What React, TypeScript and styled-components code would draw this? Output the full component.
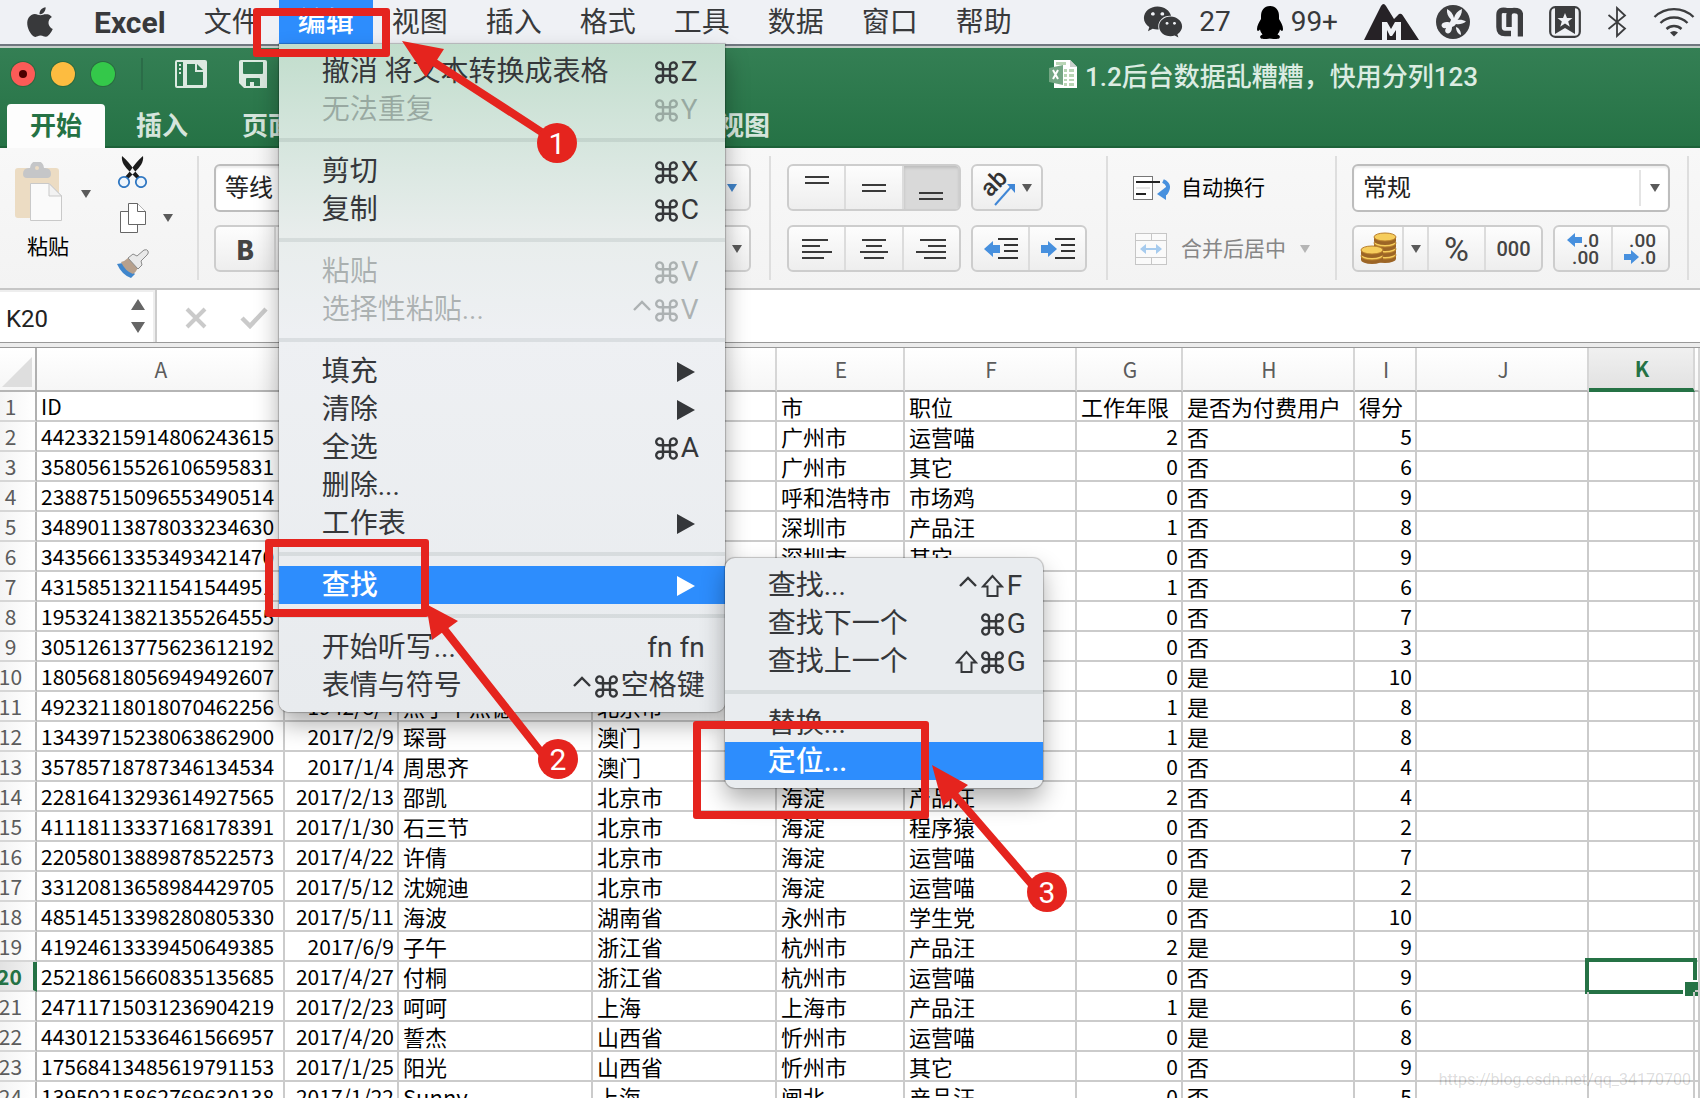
import React from "react";
import styled, { createGlobalStyle, css } from "styled-components";
import { IoLogoApple } from "react-icons/io5";
import { FaWeixin } from "react-icons/fa";

const ui = `Roboto, "Noto Sans CJK SC", sans-serif`;
const cjk = `"Noto Sans CJK SC", Roboto, sans-serif`;
const red = "#e5241e";
const green = "#257245";
const blue = "#2d8dfd";

const Global = createGlobalStyle`
  * { box-sizing: border-box; }
  body { margin: 0; font-family: ${ui}; background: #fff; overflow: hidden; }
  button, select, input { font: inherit; color: inherit; border: 0; margin: 0; padding: 0; background: none; outline: 0; border-radius: 0; }
  svg { display: block; flex: none; }
`;

const Page = styled.div`
  position: relative;
  display: flex;
  flex-direction: column;
  height: 100vh;
  overflow: hidden;
`;

/* ---------- system menu bar ---------- */

const MenuBar = styled.nav`
  display: flex;
  align-items: center;
  height: 44px;
  flex: none;
  padding: 0 5px 0 23px;
  background: #eff1f5;
  color: #38393b;
  font-size: 28px;
  line-height: 40px;
`;

const MenuSlot = styled.div`
  position: relative;
  z-index: 5;
`;

const MenuTitle = styled.button<{ $open?: boolean; $bold?: boolean }>`
  display: block;
  height: 44px;
  padding: 2px 19px 0;
  white-space: nowrap;
  ${(p) =>
    p.$bold &&
    css`
      font-size: 30px;
      font-weight: 700;
    `}
  ${(p) =>
    p.$open &&
    css`
      background: ${blue};
      color: #fff;
      font-weight: 500;
    `}
`;

const AppleMark = styled.span`
  width: 52px;
`;

const Status = styled.div`
  display: flex;
  align-items: center;
  margin-left: auto;
  gap: 26px;
`;

const StatusItem = styled.span<{ $gap?: number }>`
  display: flex;
  align-items: center;
  gap: ${(p) => p.$gap ?? 0}px;
`;

/* ---------- drop-down menus ---------- */

const Panel = styled.ul<{ $sub?: boolean }>`
  position: absolute;
  list-style: none;
  margin: 0;
  padding: 8px 0;
  color: #35373a;
  font-size: 28px;
  line-height: 36px;
  font-weight: 400;
  ${(p) =>
    p.$sub
      ? css`
          left: 100%;
          top: -8px;
          width: 318px;
          border-radius: 10px;
          background: #e9ecef;
          --end: 12px;
        `
      : css`
          left: 0;
          top: 100%;
          width: 446px;
          border-radius: 0 0 10px 10px;
          background: linear-gradient(#c1ddcc, #d6e6de 100px, #e8edec 190px, #eef0f3 290px, #e8ebee);
          --end: 20px;
        `}
  box-shadow: 0 0 1px 1px rgba(0, 0, 0, 0.22), 0 12px 24px rgba(0, 0, 0, 0.32);
`;

const Item = styled.li`
  position: relative;
`;

const ItemButton = styled.button<{ $on?: boolean; $off?: boolean }>`
  display: flex;
  align-items: center;
  width: 100%;
  height: 38px;
  padding: 2px var(--end) 0 43px;
  white-space: nowrap;
  ${(p) => p.$off && "color: rgba(50, 60, 58, 0.34);"}
  ${(p) => p.$on && `background: ${blue}; color: #fff; font-weight: 500;`}
`;

const Keys = styled.span`
  display: flex;
  align-items: center;
  gap: 3px;
  margin-left: auto;
  font-weight: 400;
`;

const Key = styled.span`
  min-width: 24px;
  text-align: left;
`;

const Divider = styled.li`
  height: 4px;
  margin: 10px 0;
  background: rgba(60, 80, 80, 0.11);
`;

/* ---------- window chrome ---------- */

const Strip = styled.div`
  height: 4px;
  flex: none;
  border-bottom: 2px solid #c6cfca;
  background: #70777f;
`;

const Chrome = styled.header`
  flex: none;
  background: linear-gradient(#347f54, ${green});
  box-shadow: inset 0 -2px #1d6239;
`;

const TitleRow = styled.div`
  display: flex;
  align-items: center;
  height: 56px;
  padding: 0 222px 4px 11px;
`;

const Lights = styled.div`
  display: flex;
  gap: 16px;
  padding-right: 26px;
  border-right: 2px solid #2b6c48;
  height: 32px;
  align-items: center;
`;

const Light = styled.button<{ $c: string }>`
  width: 24px;
  height: 24px;
  border-radius: 50%;
  background: ${(p) => p.$c};
  box-shadow: 0 0 0 1px #2a6a40;
  display: grid;
  place-items: center;
`;

const LightDot = styled.i`
  width: 8px;
  height: 8px;
  border-radius: 50%;
  background: #4d0000;
`;

const QuickTools = styled.div`
  display: flex;
  gap: 32px;
  padding-left: 32px;
`;

const DocTitle = styled.h1`
  display: flex;
  align-items: center;
  gap: 8px;
  margin: 0 0 0 auto;
  font-size: 26px;
  line-height: 32px;
  font-weight: 500;
  color: #dcece2;
  white-space: nowrap;
  span { padding-top: 6px; }
`;

const Tabs = styled.div`
  display: flex;
  height: 44px;
  padding-left: 3px;
`;

const Tab = styled.button<{ $on?: boolean }>`
  margin: 0 4px;
  padding: 0 23px;
  font-size: 26px;
  line-height: 42px;
  font-weight: 700;
  white-space: nowrap;
  border-radius: 4px 4px 0 0;
  color: ${(p) => (p.$on ? green : "#d5e5dc")};
  background: ${(p) => (p.$on ? "#fdfdfd" : "none")};
`;

/* ---------- ribbon ---------- */

const Ribbon = styled.div`
  display: flex;
  flex: none;
  height: 142px;
  padding-top: 8px;
  border-bottom: 2px solid #c6c6c6;
  background: linear-gradient(#f8f8f8, #f3f3f3);
`;

const Group = styled.section<{ $l: number; $r: number }>`
  flex: none;
  height: 124px;
  padding: 8px ${(p) => p.$r}px 0 ${(p) => p.$l}px;
  border-right: 2px solid #dedede;
`;

const ClipGroup = styled(Group)`
  display: flex;
  padding-top: 0;
`;

const Stack = styled.div`
  display: flex;
  flex-direction: column;
  gap: 14px;
`;

const Line = styled.div<{ $gap?: number }>`
  display: flex;
  align-items: center;
  height: 47px;
  gap: ${(p) => p.$gap ?? 10}px;
`;

const PasteButton = styled.button`
  display: flex;
  flex-direction: column;
  align-items: center;
  width: 66px;
  padding-top: 6px;
  font-size: 21px;
  line-height: 30px;
  color: #000;
  svg { align-self: flex-start; margin-bottom: 10px; }
`;

const PasteCaret = styled.button`
  align-self: flex-start;
  padding-top: 34px;
  margin-right: 26px;
`;

const ClipRow = styled.div`
  display: flex;
  align-items: center;
  gap: 14px;
  height: 32px;
`;

const IconButton = styled.button`
  display: block;
`;

const Segments = styled.div<{ $w: number }>`
  display: flex;
  width: ${(p) => p.$w}px;
  height: 47px;
  border: 2px solid #cdcdcd;
  border-radius: 6px;
  background: linear-gradient(#fdfdfd, #eeeeee);
  overflow: hidden;
`;

const Seg = styled.button<{ $on?: boolean; $w?: number }>`
  ${(p) => (p.$w ? `width: ${p.$w}px; flex: none;` : "flex: 1;")}
  display: flex;
  align-items: center;
  justify-content: center;
  gap: 6px;
  font-size: 20px;
  line-height: 24px;
  font-weight: 500;
  color: #444;
  ${(p) => p.$on && "background: #d9d9d9; box-shadow: inset 0 2px 3px #bdbdbd;"}
  & + & { border-left: 2px solid #dcdcdc; }
`;

const Percent = styled.span`
  font-size: 34px;
  line-height: 40px;
  font-weight: 400;
`;

const Bold = styled.span`
  font-family: ${cjk};
  font-size: 26px;
  font-weight: 900;
  line-height: 32px;
`;

const SelectBox = styled.label<{ $w: number }>`
  display: grid;
  grid-template-columns: 1fr 29px;
  align-items: center;
  width: ${(p) => p.$w}px;
  height: 48px;
  border: 2px solid #bdbdbd;
  border-radius: 6px;
  background: #fff;
  box-shadow: inset 0 2px 2px #eee;
  select {
    grid-area: 1 / 1 / 2 / 3;
    appearance: none;
    padding-left: 9px;
    height: 44px;
    font-size: 24px;
    color: #222;
  }
  > span {
    grid-area: 1 / 2;
    display: grid;
    place-items: center;
    height: 36px;
    border-left: 2px solid #e4e4e4;
    pointer-events: none;
  }
`;

const TextButton = styled.button<{ $off?: boolean }>`
  display: flex;
  align-items: center;
  gap: 8px;
  font-size: 21px;
  line-height: 30px;
  white-space: nowrap;
  color: ${(p) => (p.$off ? "#868686" : "#000")};
`;

/* ---------- formula bar ---------- */

const FormulaBar = styled.div`
  display: flex;
  flex: none;
  height: 52px;
  background: #fff;
`;

const NameBox = styled.label`
  display: flex;
  align-items: center;
  width: 157px;
  padding: 0 10px 0 6px;
  border-right: 2px solid #cdcdcd;
  box-shadow: inset -2px 2px #eeeeee;
  input { width: 100%; min-width: 0; flex: 1; padding-top: 6px; font-size: 24px; color: #222; }
`;

const FormulaTools = styled.div`
  display: flex;
  align-items: center;
  gap: 33px;
  padding: 4px 30px 0 28px;
`;

const FormulaInput = styled.input`
  flex: 1;
  font-size: 22px;
`;

const SplitBar = styled.div`
  flex: none;
  height: 6px;
  border-top: 1px solid #999;
  border-bottom: 1px solid #999;
  background: #ececec;
`;

/* ---------- sheet ---------- */

const SheetArea = styled.main`
  flex: 1;
  min-height: 0;
  overflow: hidden;
`;

const Sheet = styled.table`
  table-layout: fixed;
  width: 100%;
  border-collapse: separate;
  border-spacing: 0;
  font-family: ${cjk};
  font-size: 22px;
  line-height: 28px;
  color: #000;
`;

const SheetCol = styled.col<{ $w?: number }>`
  ${(p) => p.$w && `width: ${p.$w}px;`}
`;

const ColHead = styled.th<{ $on?: boolean }>`
  height: 44px;
  padding: 0 0 0 2px;
  font-size: 21px;
  font-weight: ${(p) => (p.$on ? 700 : 400)};
  color: ${(p) => (p.$on ? green : "#5c5c5c")};
  background: ${(p) => (p.$on ? "linear-gradient(#f0f0f0, #e2e2e2)" : "linear-gradient(#ffffff, #f6f6f6)")};
  border-right: 2px solid #d6d6d6;
  border-bottom: ${(p) => (p.$on ? `4px solid ${green}` : "2px solid #b5b5b5")};
`;

const Corner = styled(ColHead)`
  border-right-color: #b0b0b0;
  svg { margin-top: 6px; }
`;

const RowHead = styled.th<{ $on?: boolean }>`
  height: 30px;
  padding: 0 14px 0 0;
  text-align: center;
  white-space: nowrap;
  font-size: 21px;
  font-weight: ${(p) => (p.$on ? 700 : 400)};
  color: ${(p) => (p.$on ? green : "#5c5c5c")};
  background: ${(p) => (p.$on ? "linear-gradient(90deg, #e2e2e2, #f2f2f2)" : "linear-gradient(90deg, #f4f4f4, #ffffff)")};
  border-right: ${(p) => (p.$on ? `4px solid ${green}` : "2px solid #b0b0b0")};
  border-bottom: 2px solid #d6d6d6;
  div { display: flex; justify-content: center; margin: 0 -8px; }
`;

const Cell = styled.td<{ $num?: boolean; $right?: boolean }>`
  position: relative;
  height: 30px;
  padding: 0 3px 0 4px;
  white-space: nowrap;
  border-right: 2px solid #cbcbcb;
  border-bottom: 2px solid #cbcbcb;
  font-size: ${(p) => (p.$num ? 21 : 22)}px;
  text-align: ${(p) => (p.$right ? "right" : "left")};
`;

const Selection = styled.div`
  position: absolute;
  inset: -4px;
  border: 4px solid ${green};
  &::after {
    content: "";
    position: absolute;
    right: -8px;
    bottom: -8px;
    width: 14px;
    height: 14px;
    border: 2px solid #fff;
    background: ${green};
  }
`;

const Watermark = styled.div`
  position: absolute;
  right: 9px;
  bottom: 6px;
  font-size: 16px;
  line-height: 24px;
  color: rgba(0, 0, 0, 0.15);
`;

/* ---------- annotations ---------- */

const Marks = styled.div`
  position: absolute;
  inset: 0;
  z-index: 10;
  pointer-events: none;
  > svg { position: absolute; left: 0; top: 0; }
`;

const Frame = styled.div<{ $x: number; $y: number; $w: number; $h: number }>`
  position: absolute;
  left: ${(p) => p.$x}px;
  top: ${(p) => p.$y}px;
  width: ${(p) => p.$w}px;
  height: ${(p) => p.$h}px;
  border: 8px solid ${red};
  border-radius: 3px;
`;

const Badge = styled.div<{ $x: number; $y: number }>`
  position: absolute;
  left: ${(p) => p.$x - 20}px;
  top: ${(p) => p.$y - 20}px;
  width: 40px;
  height: 40px;
  border-radius: 50%;
  background: ${red};
  color: #fff;
  font-size: 30px;
  line-height: 42px;
  text-align: center;
`;

/* ---------- drawings ---------- */

const Caret = ({ c = "#5a5a5a" }: { c?: string }) => (
  <svg width="10" height="8"><path d="M0 0h10L5 8z" fill={c} /></svg>
);
const Play = () => (
  <Keys><svg width="28" height="20"><path d="M0 0l18 10L0 20z" fill="currentColor" /></svg></Keys>
);
const Cmd = () => (
  <svg width="23" height="23" viewBox="0 0 23 23" fill="none" stroke="currentColor" strokeWidth="2.4" role="img" aria-label="⌘">
    <path d="M8 8V5a3.4 3.4 0 1 0-3.4 3.2H18.400A3.400 3.400 0 1 0 15 5v13a3.400 3.400 0 1 0 3.400-3.200H4.600A3.400 3.400 0 1 0 8 18z" />
  </svg>
);
const Shift = () => (
  <svg width="23" height="24" viewBox="0 0 23 24" fill="none" stroke="currentColor" strokeWidth="2" role="img" aria-label="⇧">
    <path d="M11.500 2L2 12.500h4.500V22h10v-9.500H21z" />
  </svg>
);
const Ctrl = () => (
  <svg width="20" height="24" viewBox="0 0 20 24" fill="none" stroke="currentColor" strokeWidth="2.400" role="img" aria-label="⌃">
    <path d="M2 12l8-8 8 8" />
  </svg>
);
const mods: Record<string, () => React.ReactElement> = { c: Cmd, s: Shift, t: Ctrl };
const Shortcut = ({ m, k }: { m: string; k: string }) => (
  <Keys>
    {m.split("").map((x) => {
      const M = mods[x];
      return <M key={x} />;
    })}
    <Key>{k}</Key>
  </Keys>
);

const Penguin = () => (
  <svg width="26" height="33" viewBox="0 0 26 33" fill="#000">
    <path d="M13 0c6 0 9 4.500 9 10v3c2 3 4 7 4 10 0 2.500-1.500 2.500-3 .5-.4 2-1.300 3.500-2.500 5 2 .8 3 2 2 3.500-1.500 1.500-7 1.200-9.500.4-2.500.8-8 1.100-9.500-.4-1-1.500 0-2.700 2-3.500-1.200-1.500-2.100-3-2.500-5-1.500 2-3 2-3-.5 0-3 2-7 4-10v-3C4 4.500 7 0 13 0z" />
  </svg>
);
const Mountain = () => (
  <svg width="55" height="36" viewBox="0 0 55 36">
    <path d="M0 36L17 2q2.500-4 5 0l8 13 5-5q2-1 3.500 1L55 36z" fill="#262226" />
    <path d="M18 36V18h5l4 7 4-7h6v18h-5V26l-4 6h-2l-3-6v10z" fill="#eff1f5" />
  </svg>
);
const Disc = () => (
  <svg width="34" height="34" viewBox="0 0 34 34">
    <circle cx="17" cy="17" r="17" fill="#3c3d3f" />
    <path d="M11 4c4 2 6 5 7 9 1-4 4-7.500 8-9 0 5-2 8-4.500 11 3-.5 6 0 8.500 1.500-3 2.500-6.500 3-10 2.500-1 1.500-2.500 2.500-4 3 0 3-1 6-4 6.500-3-.5-3.500-3-2-5.500-2.500.5-4.500-.5-4.500-3 1-3 5-3.500 8-2.500 1-1 1.500-2 1.500-3C12 12 10.500 8 11 4z" fill="#eff1f5" />
    <path d="M20 22c3 1 5 4 5 8-3-1-5-4-5-8z" fill="#eff1f5" />
  </svg>
);
const Hook = () => (
  <svg width="27" height="30" viewBox="0 0 27 30" fill="none" stroke="#3c3d3f" strokeWidth="5.500">
    <path d="M10 3.500Q3 2 3 8v12q0 6.500 6 6.500h6M13 20V8q0-4.500 5-4.500 6.500 0 6.500 5v21" />
    <path d="M8 3.500h10" strokeWidth="5" />
  </svg>
);
const Bookmark = () => (
  <svg width="32" height="32" viewBox="0 0 32 32">
    <rect x="1.200" y="1.200" width="29.600" height="29.600" rx="5" fill="none" stroke="#3c3d3f" strokeWidth="2.200" />
    <path d="M6 2h20v26l-10-6-10 6z" fill="#3c3d3f" />
    <path d="M16 7l2 5h5.500l-4.300 3.500 1.600 5.200-4.800-3.100-4.800 3.100 1.600-5.200L8.500 12H14z" fill="#eff1f5" />
  </svg>
);
const BluetoothMark = () => (
  <svg width="20" height="32" viewBox="0 0 20 32" fill="none" stroke="#3c3d3f" strokeWidth="1.800">
    <path d="M1.500 9L18 22.500l-8 7.500V2l8 7.500L1.500 23" />
  </svg>
);
const Wifi = () => (
  <svg width="42" height="30" viewBox="0 0 42 30" fill="none" stroke="#3c3d3f" strokeWidth="2.400">
    <path d="M1.500 10a28 28 0 0 1 39 0M7.500 16a19.500 19.500 0 0 1 27 0M13.500 22a11 11 0 0 1 15 0" />
    <path d="M17 25.500a6 6 0 0 1 8 0L21 29.500z" fill="#3c3d3f" stroke="none" />
  </svg>
);

const PanelIcon = () => (
  <svg width="32" height="28" viewBox="0 0 32 28">
    <rect width="32" height="28" rx="2" fill="#dceae1" />
    <rect x="2" y="2" width="6" height="24" fill="#2f7a50" />
    <path d="M12 4h8v8h8v13H12z" fill="#2f7a50" />
    <path d="M22 4l6 6h-6z" fill="#2f7a50" />
    <path d="M4 5h2M4 9h2M4 13h2" stroke="#dceae1" strokeWidth="2" />
  </svg>
);
const SaveIcon = () => (
  <svg width="28" height="28" viewBox="0 0 28 28">
    <path d="M0 2q0-2 2-2h24q2 0 2 2v26H5l-5-5z" fill="#dceae1" />
    <path d="M4 2h20v11q0 1-1 1H5q-1 0-1-1zM7 26v-7q0-1 1-1h12q1 0 1 1v7h-6v-4h-4v4z" fill="#2f7a50" />
  </svg>
);
const ExcelIcon = () => (
  <svg width="28" height="28" viewBox="0 0 28 28">
    <path d="M5 0h16l7 7v21H5z" fill="#fff" />
    <path d="M21 0v7h7z" fill="#c9cfcb" />
    <path d="M15 9h3v3h-3zM20 9h5v3h-5zM15 14h3v3h-3zM20 14h5v3h-5zM15 19h3v2h-3zM20 19h5v2h-5zM15 23h3v3h-3zM20 23h5v3h-5zM7 2h10v3H7z" fill="#b9d5b5" />
    <path d="M0 8l14-3v20L0 22z" fill="#74a684" />
    <path d="M4 10l5 9M9 10l-5 9" stroke="#fff" strokeWidth="2" />
  </svg>
);

const Clipboard = () => (
  <svg width="48" height="60" viewBox="0 0 48 60">
    <rect x="0" y="6" width="44" height="50" rx="3" fill="#ecdcc3" />
    <path d="M8 12q0-6 6-6h1a7 7 0 0 1 14 0h1q6 0 6 6 0 4-4 4H12q-4 0-4-4z" fill="#c5c6c8" />
    <circle cx="22" cy="6" r="2" fill="#ecdcc3" />
    <path d="M15.500 21.500H34L46.500 34v24.500h-31z" fill="#fafafa" stroke="#c9c9c9" />
    <path d="M34 21.500V34h12.500z" fill="#f2f2f2" stroke="#c9c9c9" />
  </svg>
);
const Scissors = () => (
  <svg width="32" height="32" viewBox="0 0 32 32">
    <path d="M5 0c-1 6 3 11 8 16l7 7 3-2-6-7C14 9 10 4 5 0zM26 0c1 6-3 11-8 16l-7 7-3-2 6-7C17 9 21 4 26 0z" fill="#1b1b1b" />
    <circle cx="7" cy="26" r="5.200" fill="#eef5fc" stroke="#2f77c2" strokeWidth="1.800" />
    <circle cx="24" cy="26" r="5.200" fill="#eef5fc" stroke="#2f77c2" strokeWidth="1.800" />
  </svg>
);
const Copy = () => (
  <svg width="32" height="32" viewBox="0 0 32 32" fill="#fff" stroke="#666">
    <path d="M3.500 9.500h17v21h-17z" />
    <path d="M11.500 1.500h9l8 8v13h-17z" />
    <path d="M20.500 1.500v8h8" />
  </svg>
);
const Brush = () => (
  <svg width="32" height="30" viewBox="0 0 32 30">
    <path d="M0 15l6-1 12 11-4 4q-9-3-14-14z" fill="#3f86cc" />
    <path d="M4 13q4-1 7-4l10 10q-2 4-5 6Q8 22 4 13z" fill="#b7a08c" />
    <path d="M11 9l5-4 4 2 7-6q3-1 4 1 1 2-1 4l-6 6 1 4-4 4z" fill="#e9e9e9" stroke="#8a8a8a" />
  </svg>
);
const Lines = ({ rows }: { rows: number[][] }) => (
  <svg width="32" height="40" stroke="#3a3a3a" strokeWidth="2">
    {rows.map(([x, w, y]) => <path key={y} d={`M${x} ${y}h${w}`} />)}
  </svg>
);
const Rotate = () => (
  <svg width="34" height="36" viewBox="0 0 34 36">
    <text x="0" y="0" transform="translate(8 28) rotate(-45)" fontSize="24" fill="#333" fontFamily="Roboto, sans-serif">ab</text>
    <path d="M13 35L29 17" stroke="#3f86d6" strokeWidth="2" />
    <path d="M25 14h8v9z" fill="#3f86d6" />
  </svg>
);
const Indent = ({ out }: { out?: boolean }) => (
  <svg width="34" height="24" viewBox="0 0 34 24">
    <path d={out ? "M0 12L9 4v4h7v8H9v4z" : "M16 12L7 4v4H0v8h7v4z"} fill="#4790de" />
    <path d="M14 2h20M20 8h14M20 14h14M14 21h20" stroke="#333" strokeWidth="2" />
  </svg>
);
const WrapIcon = () => (
  <svg width="40" height="28" viewBox="0 0 40 28" fill="none">
    <rect x=".5" y="2.500" width="19" height="23" stroke="#777" fill="#fff" />
    <path d="M3 14h14" stroke="#ccc" />
    <path d="M3 8h24M3 20h10" stroke="#222" strokeWidth="2" />
    <path d="M30 7q9 4 2 13" stroke="#4790de" strokeWidth="4" />
    <path d="M24 20l9-7v13z" fill="#4790de" />
  </svg>
);
const MergeIcon = () => (
  <svg width="40" height="32" viewBox="0 0 40 32" fill="none" stroke="#c6c6c6">
    <rect x="2.500" y=".5" width="31" height="31" fill="#fafafa" />
    <path d="M2 7.500h32M2 24.500h32M18.500 0v7M18.500 25v7" />
    <path d="M9 16h18" stroke="#a6cbee" strokeWidth="2" />
    <path d="M7 16l6-5v10zM29 16l-6-5v10z" fill="#a6cbee" stroke="none" />
  </svg>
);
const Coins = () => {
  const stack = (cx: number, top: number, n: number) =>
    Array.from({ length: n }, (_, i) => n - 1 - i).map((i) => (
      <g key={`${cx}-${i}`}>
        <path d={`M${cx - 11} ${top + i * 6}v4a11 4 0 0 0 22 0v-4z`} fill="#9c6526" />
        <ellipse cx={cx} cy={top + i * 6} rx="11" ry="4" fill="#f6cd5c" stroke="#b97f2c" />
      </g>
    ));
  return (
    <svg width="37" height="34" viewBox="0 0 37 34">
      {stack(25, 5, 4)}
      {stack(12, 18, 2)}
    </svg>
  );
};
const Decimal = ({ more }: { more?: boolean }) => (
  <svg width="34" height="36" viewBox="0 0 34 36" fontSize="19" fontWeight="500" fill="#444" fontFamily="Roboto, sans-serif" textAnchor="end">
    <text x="33" y="16">{more ? ".0" : ".00"}</text>
    <text x="33" y="33">{more ? ".00" : ".0"}</text>
    <path d={more ? "M1 9l8-7v4h7v6H9v4z" : "M16 26l-8-7v4H1v6h7v4z"} fill="#4790de" />
  </svg>
);

/* ---------- data ---------- */

const columns: [string, number | undefined][] = [
  ["A", 248], ["B", 114], ["C", 194], ["D", 184], ["E", 128], ["F", 172],
  ["G", 106], ["H", 172], ["I", 62], ["J", 172], ["K", 106], ["", undefined],
];

const rows: string[][] = [
  ["ID", "", "", "", "市", "职位", "工作年限", "是否为付费用户", "得分"],
  ["44233215914806243615", "", "", "", "广州市", "运营喵", "2", "否", "5"],
  ["35805615526106595831", "", "", "", "广州市", "其它", "0", "否", "6"],
  ["23887515096553490514", "", "", "", "呼和浩特市", "市场鸡", "0", "否", "9"],
  ["34890113878033234630", "", "", "", "深圳市", "产品汪", "1", "否", "8"],
  ["34356613353493421470", "", "", "", "深圳市", "其它", "0", "否", "9"],
  ["43158513211541544951", "", "", "", "", "", "1", "否", "6"],
  ["19532413821355264555", "", "", "", "", "", "0", "否", "7"],
  ["30512613775623612192", "", "", "", "", "", "0", "否", "3"],
  ["18056818056949492607", "", "", "", "", "", "0", "是", "10"],
  ["49232118018070462256", "1942/8/4", "点子个点德", "北京市", "", "", "1", "是", "8"],
  ["13439715238063862900", "2017/2/9", "琛哥", "澳门", "", "", "1", "是", "8"],
  ["35785718787346134534", "2017/1/4", "周思齐", "澳门", "", "", "0", "否", "4"],
  ["22816413293614927565", "2017/2/13", "邵凯", "北京市", "海淀", "产品汪", "2", "否", "4"],
  ["41118113337168178391", "2017/1/30", "石三节", "北京市", "海淀", "程序猿", "0", "否", "2"],
  ["22058013889878522573", "2017/4/22", "许倩", "北京市", "海淀", "运营喵", "0", "否", "7"],
  ["33120813658984429705", "2017/5/12", "沈婉迪", "北京市", "海淀", "运营喵", "0", "是", "2"],
  ["48514513398280805330", "2017/5/11", "海波", "湖南省", "永州市", "学生党", "0", "否", "10"],
  ["41924613339450649385", "2017/6/9", "子午", "浙江省", "杭州市", "产品汪", "2", "是", "9"],
  ["25218615660835135685", "2017/4/27", "付桐", "浙江省", "杭州市", "运营喵", "0", "否", "9"],
  ["24711715031236904219", "2017/2/23", "呵呵", "上海", "上海市", "产品汪", "1", "是", "6"],
  ["44301215336461566957", "2017/4/20", "誓杰", "山西省", "忻州市", "运营喵", "0", "是", "8"],
  ["17568413485619791153", "2017/1/25", "阳光", "山西省", "忻州市", "其它", "0", "否", "9"],
  ["13950215862769630138", "2017/1/22", "Sunny", "上海", "闸北", "产品汪", "0", "否", "5"],
];

const FindMenu = () => (
  <Panel $sub>
    <Item><ItemButton>查找...<Shortcut m="ts" k="F" /></ItemButton></Item>
    <Item><ItemButton>查找下一个<Shortcut m="c" k="G" /></ItemButton></Item>
    <Item><ItemButton>查找上一个<Shortcut m="sc" k="G" /></ItemButton></Item>
    <Divider />
    <Item><ItemButton>替换...</ItemButton></Item>
    <Item><ItemButton $on>定位...</ItemButton></Item>
  </Panel>
);

const EditMenu = () => (
  <Panel>
    <Item><ItemButton>撤消 将文本转换成表格<Shortcut m="c" k="Z" /></ItemButton></Item>
    <Item><ItemButton $off>无法重复<Shortcut m="c" k="Y" /></ItemButton></Item>
    <Divider />
    <Item><ItemButton>剪切<Shortcut m="c" k="X" /></ItemButton></Item>
    <Item><ItemButton>复制<Shortcut m="c" k="C" /></ItemButton></Item>
    <Divider />
    <Item><ItemButton $off>粘贴<Shortcut m="c" k="V" /></ItemButton></Item>
    <Item><ItemButton $off>选择性粘贴...<Shortcut m="tc" k="V" /></ItemButton></Item>
    <Divider />
    <Item><ItemButton>填充<Play /></ItemButton></Item>
    <Item><ItemButton>清除<Play /></ItemButton></Item>
    <Item><ItemButton>全选<Shortcut m="c" k="A" /></ItemButton></Item>
    <Item><ItemButton>删除...</ItemButton></Item>
    <Item><ItemButton>工作表<Play /></ItemButton></Item>
    <Divider />
    <Item><ItemButton $on>查找<Play /></ItemButton><FindMenu /></Item>
    <Divider />
    <Item><ItemButton>开始听写...<Shortcut m="" k="fn fn" /></ItemButton></Item>
    <Item><ItemButton>表情与符号<Shortcut m="tc" k="空格键" /></ItemButton></Item>
  </Panel>
);

export default function App() {
  return (
    <Page>
      <Global />
      <MenuBar>
        <AppleMark><IoLogoApple size={34} /></AppleMark>
        <MenuTitle $bold>Excel</MenuTitle>
        <MenuTitle>文件</MenuTitle>
        <MenuSlot>
          <MenuTitle $open>编辑</MenuTitle>
          <EditMenu />
        </MenuSlot>
        {["视图", "插入", "格式", "工具", "数据", "窗口", "帮助"].map((t) => <MenuTitle key={t}>{t}</MenuTitle>)}
        <Status>
          <StatusItem $gap={16}><FaWeixin size={40} />27</StatusItem>
          <StatusItem $gap={8}><Penguin />99+</StatusItem>
          <StatusItem $gap={17}><Mountain /><Disc /></StatusItem>
          <Hook />
          <Bookmark />
          <BluetoothMark />
          <Wifi />
        </Status>
      </MenuBar>
      <Strip />

      <Chrome>
        <TitleRow>
          <Lights>
            <Light $c="#fc5b57" aria-label="关闭"><LightDot /></Light>
            <Light $c="#fdbc40" aria-label="最小化" />
            <Light $c="#34c84a" aria-label="缩放" />
          </Lights>
          <QuickTools>
            <IconButton aria-label="模板"><PanelIcon /></IconButton>
            <IconButton aria-label="保存"><SaveIcon /></IconButton>
          </QuickTools>
          <DocTitle><ExcelIcon /><span>1.2后台数据乱糟糟，快用分列123</span></DocTitle>
        </TitleRow>
        <Tabs>
          {["开始", "插入", "页面布局", "公式", "数据", "审阅", "视图"].map((t, i) => (
            <Tab key={t} $on={i === 0}>{t}</Tab>
          ))}
        </Tabs>
      </Chrome>

      <Ribbon>
        <ClipGroup $l={15} $r={24}>
          <PasteButton><Clipboard />粘贴</PasteButton>
          <PasteCaret aria-label="粘贴选项"><Caret /></PasteCaret>
          <Stack>
            <ClipRow><IconButton aria-label="剪切"><Scissors /></IconButton></ClipRow>
            <ClipRow><IconButton aria-label="复制"><Copy /></IconButton><Caret /></ClipRow>
            <ClipRow><IconButton aria-label="格式刷"><Brush /></IconButton></ClipRow>
          </Stack>
        </ClipGroup>

        <Group $l={15} $r={18}>
          <Stack>
            <Line>
              <SelectBox $w={320}>
                <select aria-label="字体"><option>等线</option></select>
                <span><Caret /></span>
              </SelectBox>
              <Segments $w={207}>
                <Seg aria-label="字号" />
                <Seg aria-label="增大字号" />
                <Seg $w={36} aria-label="减小字号"><Caret c="#4083c8" /></Seg>
              </Segments>
            </Line>
            <Line>
              <Segments $w={537}>
                <Seg $w={58} aria-label="加粗"><Bold>B</Bold></Seg>
                <Seg aria-label="倾斜" />
                <Seg aria-label="填充颜色" />
                <Seg $w={26} aria-label="字体颜色"><Caret /></Seg>
              </Segments>
            </Line>
          </Stack>
        </Group>

        <Group $l={16} $r={19}>
          <Stack>
            <Line>
              <Segments $w={174}>
                <Seg aria-label="顶端对齐"><Lines rows={[[4, 24, 9], [4, 24, 15]]} /></Seg>
                <Seg aria-label="垂直居中"><Lines rows={[[4, 24, 17], [4, 24, 23]]} /></Seg>
                <Seg $on aria-label="底端对齐"><Lines rows={[[4, 24, 25], [4, 24, 31]]} /></Seg>
              </Segments>
              <Segments $w={72}><Seg aria-label="方向"><Rotate /><Caret /></Seg></Segments>
            </Line>
            <Line>
              <Segments $w={174}>
                <Seg aria-label="左对齐"><Lines rows={[[1, 26, 11], [1, 18, 17], [1, 30, 23], [1, 22, 29]]} /></Seg>
                <Seg aria-label="居中"><Lines rows={[[4, 24, 11], [8, 16, 17], [2, 28, 23], [6, 20, 29]]} /></Seg>
                <Seg aria-label="右对齐"><Lines rows={[[5, 26, 11], [13, 18, 17], [1, 30, 23], [9, 22, 29]]} /></Seg>
              </Segments>
              <Segments $w={116}>
                <Seg aria-label="减少缩进"><Indent out /></Seg>
                <Seg aria-label="增加缩进"><Indent /></Seg>
              </Segments>
            </Line>
          </Stack>
        </Group>

        <Group $l={25} $r={25}>
          <Stack>
            <Line><TextButton><WrapIcon />自动换行</TextButton></Line>
            <Line $gap={14}><TextButton $off><MergeIcon />合并后居中</TextButton><Caret c="#b5b5b5" /></Line>
          </Stack>
        </Group>

        <Group $l={15} $r={17}>
          <Stack>
            <Line>
              <SelectBox $w={318}>
                <select aria-label="数字格式"><option>常规</option></select>
                <span><Caret /></span>
              </SelectBox>
            </Line>
            <Line>
              <Segments $w={191}>
                <Seg $w={48} aria-label="货币"><Coins /></Seg>
                <Seg $w={25} aria-label="货币选项"><Caret /></Seg>
                <Seg><Percent>%</Percent></Seg>
                <Seg>000</Seg>
              </Segments>
              <Segments $w={117}>
                <Seg aria-label="增加小数位数"><Decimal more /></Seg>
                <Seg aria-label="减少小数位数"><Decimal /></Seg>
              </Segments>
            </Line>
          </Stack>
        </Group>
      </Ribbon>

      <FormulaBar>
        <NameBox>
          <input aria-label="名称框" defaultValue="K20" />
          <svg width="14" height="34"><path d="M0 11L7 0l7 11zM0 23h14L7 34z" fill="#666" /></svg>
        </NameBox>
        <FormulaTools>
          <IconButton aria-label="取消">
            <svg width="22" height="22" stroke="#cacaca" strokeWidth="4"><path d="M2 2l18 18M20 2L2 20" /></svg>
          </IconButton>
          <IconButton aria-label="输入">
            <svg width="28" height="22" stroke="#cacaca" strokeWidth="4.500" fill="none"><path d="M2 11l8 8L26 2" /></svg>
          </IconButton>
        </FormulaTools>
        <FormulaInput aria-label="编辑栏" />
      </FormulaBar>
      <SplitBar />

      <SheetArea>
        <Sheet>
          <colgroup>
            <SheetCol $w={37} />
            {columns.map(([c, w]) => <SheetCol key={c} $w={w} />)}
          </colgroup>
          <thead>
            <tr>
              <Corner><svg width="30" height="30"><path d="M30 0v30H0z" fill="#dedede" /></svg></Corner>
              {columns.map(([c]) => <ColHead key={c} $on={c === "K"}>{c}</ColHead>)}
            </tr>
          </thead>
          <tbody>
            {rows.map((r, i) => (
              <tr key={i}>
                <RowHead $on={i === 19}><div>{i + 1}</div></RowHead>
                {columns.map(([c], j) => (
                  <Cell key={c} $num={/^[\dI]/.test(r[j] ?? "")} $right={i > 0 && (j === 1 || j === 6 || j === 8)}>
                    {r[j]}
                    {i === 19 && c === "K" && <Selection />}
                  </Cell>
                ))}
              </tr>
            ))}
          </tbody>
        </Sheet>
      </SheetArea>

      <Watermark>https://blog.csdn.net/qq_34170700</Watermark>

      <Marks>
        <Frame $x={253} $y={8} $w={137} $h={49} />
        <Frame $x={265} $y={539} $w={164} $h={78} />
        <Frame $x={693} $y={721} $w={236} $h={98} />
        <svg width="1100" height="920" fill={red} stroke={red}>
          <path d="M432 61L546 135M444 629L544 756M953 793L1034 887" strokeWidth="8" />
          <path d="M402 41l42 8-18 28zM426 604l32 17-26 19zM932 765l36 20-25 21z" stroke="none" />
        </svg>
        <Badge $x={557} $y={143}>1</Badge>
        <Badge $x={558} $y={759}>2</Badge>
        <Badge $x={1047} $y={892}>3</Badge>
      </Marks>
    </Page>
  );
}
